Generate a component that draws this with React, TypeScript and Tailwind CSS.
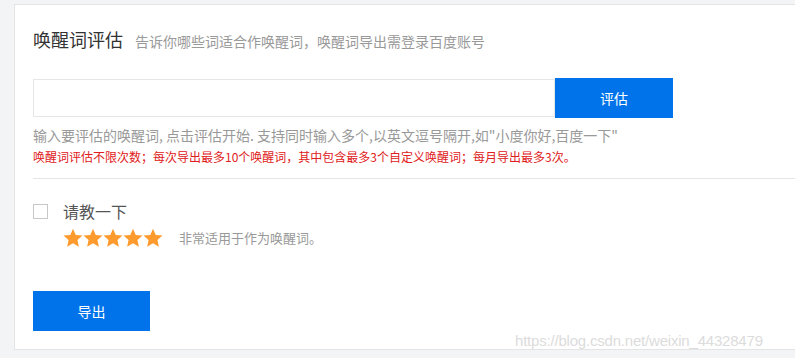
import React from "react";

const Star = () => (
  <svg viewBox="0 0 24 24" className="w-[20px] h-[20px]" fill="#ff9a2e">
    <path d="M12 0.8L15.29 8.27L23.41 9.09L17.33 14.53L19.05 22.51L12 18.4L4.95 22.51L6.67 14.53L0.59 9.09L8.71 8.27Z" />
  </svg>
);

export default function App() {
  return (
    <div
      className="relative w-[795px] h-[358px] overflow-hidden bg-[#f3f4f6] pt-[4px] pl-[14px]"
      style={{ fontFamily: '"Noto Sans CJK SC", "Noto Sans", sans-serif' }}
    >
      <div className="w-[800px] bg-white border border-[#e4e4e4] pl-[18px] pt-[22px] pb-[18px]">
        {/* title */}
        <div className="flex items-baseline">
          <span className="text-[18px] leading-[24px] text-[#333]">唤醒词评估</span>
          <span className="ml-[12px] text-[14px] leading-[24px] text-[#999]">
            告诉你哪些词适合作唤醒词，唤醒词导出需登录百度账号
          </span>
        </div>

        {/* input */}
        <div className="mt-[25px] flex items-center">
          <input
            className="w-[522px] h-[38px] border border-[#e6e6e6] outline-none px-2 text-[14px]"
            type="text"
          />
          <button className="w-[118px] h-[40px] bg-[#0073eb] text-white text-[14px]">评估</button>
        </div>

        <p className="mt-[7px] text-[14px] leading-[20px] text-[#999]">
          输入要评估的唤醒词, 点击评估开始. 支持同时输入多个,以英文逗号隔开,如"小度你好,百度一下"
        </p>
        <p className="mt-[4px] text-[12px] leading-[16px] text-[#e02020]">
          唤醒词评估不限次数；每次导出最多10个唤醒词，其中包含最多3个自定义唤醒词；每月导出最多3次。
        </p>

        <div className="mt-[13px] border-t border-[#e5e5e5]" />

        {/* result */}
        <div className="mt-[21px] flex items-center gap-[15px]">
          <span className="w-[15px] h-[15px] border border-[#c8c8c8] bg-white" />
          <span className="text-[16px] leading-[22px] text-[#555]">请教一下</span>
        </div>
        <div className="mt-[6px] pl-[30px] flex items-center">
          <div className="flex">
            <Star />
            <Star />
            <Star />
            <Star />
            <Star />
          </div>
          <span className="ml-[16px] text-[13px] text-[#999]">非常适用于作为唤醒词。</span>
        </div>

        <button className="mt-[43px] w-[117px] h-[40px] bg-[#0073eb] text-white text-[14px]">导出</button>
      </div>

      <span
        className="absolute left-[515px] top-[330px] text-[15px] text-[#dcdcdc] tracking-[-0.2px]"
        style={{ fontFamily: '"Liberation Sans", sans-serif' }}
      >
        https://blog.csdn.net/weixin_44328479
      </span>
    </div>
  );
}
